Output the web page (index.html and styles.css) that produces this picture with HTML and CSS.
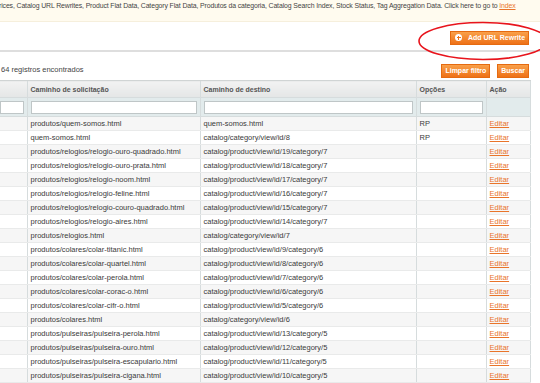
FILE: index.html
```html
<!DOCTYPE html>
<html lang="pt">
<head>
  <meta charset="UTF-8">
  <title>Reescritas de URL</title>
  <link rel="stylesheet" href="styles.css">
</head>
<body>
  <div class="notice">rices, Catalog URL Rewrites, Product Flat Data, Category Flat Data, Produtos da categoria, Catalog Search Index, Stock Status, Tag Aggregation Data. Click here to go to <a href="#">Index</a></div>

  <div class="page-head">
    <button class="btn btn-add"><span class="plus"></span>Add URL Rewrite</button>
    <svg class="mark" width="130" height="42" viewBox="0 0 130 42">
      <ellipse cx="67" cy="20" rx="64" ry="18.5" fill="none" stroke="#e8141c" stroke-width="1.6"/>
    </svg>
  </div>

  <div class="grid-actions">
    <span class="count">64 registros encontrados</span>
    <div class="btns">
      <button class="btn">Limpar filtro</button>
      <button class="btn">Buscar</button>
    </div>
  </div>

  <table class="grid">
    <colgroup>
      <col class="c1"><col class="c2"><col class="c3"><col class="c4"><col class="c5">
    </colgroup>
    <thead>
      <tr class="headings">
        <th></th>
        <th>Caminho de solicitação</th>
        <th>Caminho de destino</th>
        <th>Opções</th>
        <th>Ação</th>
      </tr>
      <tr class="filter">
        <th><input type="text"></th>
        <th><input type="text"></th>
        <th><input type="text"></th>
        <th><input type="text"></th>
        <th></th>
      </tr>
    </thead>
    <tbody>
      <tr><td></td><td>produtos/quem-somos.html</td><td>quem-somos.html</td><td>RP</td><td><a href="#">Editar</a></td></tr>
      <tr><td></td><td>quem-somos.html</td><td>catalog/category/view/id/8</td><td>RP</td><td><a href="#">Editar</a></td></tr>
      <tr><td></td><td>produtos/relogios/relogio-ouro-quadrado.html</td><td>catalog/product/view/id/19/category/7</td><td></td><td><a href="#">Editar</a></td></tr>
      <tr><td></td><td>produtos/relogios/relogio-ouro-prata.html</td><td>catalog/product/view/id/18/category/7</td><td></td><td><a href="#">Editar</a></td></tr>
      <tr><td></td><td>produtos/relogios/relogio-noom.html</td><td>catalog/product/view/id/17/category/7</td><td></td><td><a href="#">Editar</a></td></tr>
      <tr><td></td><td>produtos/relogios/relogio-feline.html</td><td>catalog/product/view/id/16/category/7</td><td></td><td><a href="#">Editar</a></td></tr>
      <tr><td></td><td>produtos/relogios/relogio-couro-quadrado.html</td><td>catalog/product/view/id/15/category/7</td><td></td><td><a href="#">Editar</a></td></tr>
      <tr><td></td><td>produtos/relogios/relogio-aires.html</td><td>catalog/product/view/id/14/category/7</td><td></td><td><a href="#">Editar</a></td></tr>
      <tr><td></td><td>produtos/relogios.html</td><td>catalog/category/view/id/7</td><td></td><td><a href="#">Editar</a></td></tr>
      <tr><td></td><td>produtos/colares/colar-titanic.html</td><td>catalog/product/view/id/9/category/6</td><td></td><td><a href="#">Editar</a></td></tr>
      <tr><td></td><td>produtos/colares/colar-quartel.html</td><td>catalog/product/view/id/8/category/6</td><td></td><td><a href="#">Editar</a></td></tr>
      <tr><td></td><td>produtos/colares/colar-perola.html</td><td>catalog/product/view/id/7/category/6</td><td></td><td><a href="#">Editar</a></td></tr>
      <tr><td></td><td>produtos/colares/colar-corac-o.html</td><td>catalog/product/view/id/6/category/6</td><td></td><td><a href="#">Editar</a></td></tr>
      <tr><td></td><td>produtos/colares/colar-cifr-o.html</td><td>catalog/product/view/id/5/category/6</td><td></td><td><a href="#">Editar</a></td></tr>
      <tr><td></td><td>produtos/colares.html</td><td>catalog/category/view/id/6</td><td></td><td><a href="#">Editar</a></td></tr>
      <tr><td></td><td>produtos/pulseiras/pulseira-perola.html</td><td>catalog/product/view/id/13/category/5</td><td></td><td><a href="#">Editar</a></td></tr>
      <tr><td></td><td>produtos/pulseiras/pulseira-ouro.html</td><td>catalog/product/view/id/12/category/5</td><td></td><td><a href="#">Editar</a></td></tr>
      <tr><td></td><td>produtos/pulseiras/pulseira-escapulario.html</td><td>catalog/product/view/id/11/category/5</td><td></td><td><a href="#">Editar</a></td></tr>
      <tr><td></td><td>produtos/pulseiras/pulseira-cigana.html</td><td>catalog/product/view/id/10/category/5</td><td></td><td><a href="#">Editar</a></td></tr>
    </tbody>
  </table>
</body>
</html>
```

FILE: styles.css
```css
body {
  margin: 0;
  background: #fff;
  font-family: "Liberation Sans", Arial, sans-serif;
  font-size: 7.5px;
  color: #3a3a3a;
  overflow: hidden;
}

a {
  color: #e9742a;
}

.notice {
  height: 21px;
  line-height: 12px;
  font-size: 6.9px;
  letter-spacing: -0.12px;
  background: #fffbef;
  border-bottom: 1px solid #f6efdc;
  white-space: nowrap;
  overflow: hidden;
  text-indent: -1px;
  color: #444;
}

.page-head {
  position: relative;
  height: 28px;
  display: flex;
  justify-content: flex-end;
  align-items: center;
  padding: 0 11px 0 0;
  border-bottom: 2px solid #dedede;
}

.mark {
  position: absolute;
  left: 416px;
  top: -1px;
}

.btn {
  font-family: inherit;
  font-size: 7px;
  font-weight: bold;
  color: #fff;
  height: 14px;
  padding: 0 3px;
  border: 1px solid #e56a10;
  background: linear-gradient(#f9a04a, #ee7117);
  line-height: 12px;
  white-space: nowrap;
  cursor: pointer;
}

.btn-add {
  display: flex;
  align-items: center;
  width: 79px;
  height: 14px;
  padding: 0 0 0 4px;
  margin-top: 3px;
}

.plus {
  position: relative;
  flex: none;
  width: 7px;
  height: 7px;
  border-radius: 50%;
  background: #fff;
  margin-right: 6px;
}

.plus::before,
.plus::after {
  content: "";
  position: absolute;
  background: #ee7117;
}

.plus::before {
  left: 1.5px;
  top: 3px;
  width: 4px;
  height: 1px;
}

.plus::after {
  left: 3px;
  top: 1.5px;
  width: 1px;
  height: 4px;
}

.grid-actions {
  height: 28px;
  display: flex;
  justify-content: space-between;
  align-items: flex-end;
  padding: 0 11px 2px 1px;
  box-sizing: border-box;
}

.count {
  color: #444;
  margin-bottom: 4px;
}

.btns {
  display: flex;
  gap: 7px;
}

.grid {
  width: 530px;
  border-collapse: collapse;
  table-layout: fixed;
  border-right: 1px solid #d6dcdd;
}

.c1 { width: 27px; }
.c2 { width: 173px; }
.c3 { width: 216px; }
.c4 { width: 70px; }
.c5 { width: 44px; }

.grid th,
.grid td {
  padding: 0 3px;
  text-align: left;
  white-space: nowrap;
  overflow: hidden;
  border-left: 1px solid #d6dcdd;
}

.grid th:first-child,
.grid td:first-child {
  border-left: none;
}

.headings th {
  height: 16px;
  font-size: 7px;
  font-weight: bold;
  color: #555;
  background: linear-gradient(#f2f2f2, #e4e6e6);
  border-top: 1px solid #d0d4d4;
  border-bottom: 1px solid #d6dcdd;
}

.filter th {
  height: 18px;
  background: #e2ebec;
  border-bottom: 1px solid #d6dcdd;
}

.filter input {
  display: block;
  box-sizing: border-box;
  width: 100%;
  height: 13px;
  margin: 0;
  border: 1px solid #bfc6c7;
  background: #fff;
}

.filter th:first-child input {
  width: 24px;
  margin-left: -3px;
}

.grid td {
  height: 13px;
  line-height: 13px;
  border-bottom: 1px solid #e9eaea;
}

.grid tbody tr:nth-child(odd) td {
  background: #f6f6f6;
}
```
